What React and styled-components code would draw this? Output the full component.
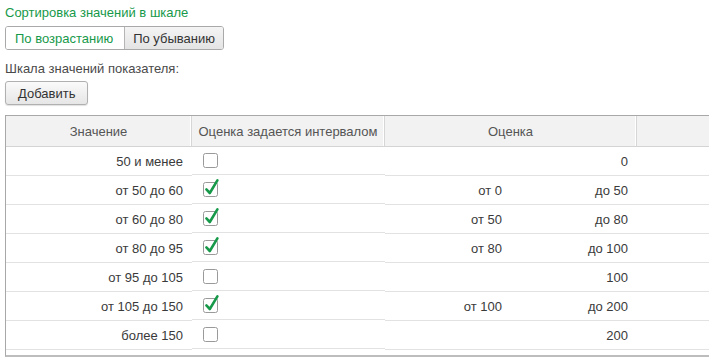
import React from "react";
import styled, { createGlobalStyle } from "styled-components";

const GREEN = "#17994a";

const rows = [
  { value: "50 и менее", interval: false, single: "0" },
  { value: "от 50 до 60", interval: true, from: "от 0", to: "до 50" },
  { value: "от 60 до 80", interval: true, from: "от 50", to: "до 80" },
  { value: "от 80 до 95", interval: true, from: "от 80", to: "до 100" },
  { value: "от 95 до 105", interval: false, single: "100" },
  { value: "от 105 до 150", interval: true, from: "от 100", to: "до 200" },
  { value: "более 150", interval: false, single: "200" },
];

const Check = ({ checked }) => (
  <svg width="18" height="20" viewBox="0 0 18 20">
    <rect x="0.5" y="4.5" width="14" height="14" rx="2" fill="#fff" stroke="#9a9a9a" />
    {checked && (
      <path
        d="M3.4 11.4 L6.8 15 L14.4 2.4"
        fill="none"
        stroke={GREEN}
        strokeWidth="2.6"
        strokeLinecap="round"
        strokeLinejoin="round"
      />
    )}
  </svg>
);

const App = () => {
  return (
    <>
      <GlobalStyle />
      <Page>
        <Title>Сортировка значений в шкале</Title>
        <Toggle>
          <ToggleButton active>По возрастанию</ToggleButton>
          <ToggleButton>По убыванию</ToggleButton>
        </Toggle>
        <Label>Шкала значений показателя:</Label>
        <Button>Добавить</Button>
        <Table>
          <Header>
            <HeadCell>Значение</HeadCell>
            <HeadCell>Оценка задается интервалом</HeadCell>
            <HeadCell span={2}>Оценка</HeadCell>
            <HeadCell last />
          </Header>
          {rows.map((r) => (
            <Row key={r.value}>
              <Cell align="right">{r.value}</Cell>
              <CheckCell>
                <Check checked={r.interval} />
              </CheckCell>
              {r.interval ? (
                <>
                  <Cell align="right">{r.from}</Cell>
                  <Cell align="right">{r.to}</Cell>
                </>
              ) : (
                <Cell align="right" span={2}>
                  {r.single}
                </Cell>
              )}
              <Cell />
            </Row>
          ))}
          <Tail />
        </Table>
      </Page>
    </>
  );
};

const GlobalStyle = createGlobalStyle`
  body {
    margin: 0;
    background: #fff;
    overflow: hidden;
    font-family: "Liberation Sans", Arial, sans-serif;
    font-size: 13px;
  }
`;

const Page = styled.div`
  padding: 4px 0 0 5px;
  display: flex;
  flex-direction: column;
  align-items: flex-start;
  width: 720px;
`;

const Title = styled.div`
  color: ${GREEN};
  line-height: 17px;
  height: 22px;
`;

const Toggle = styled.div`
  display: flex;
  height: 24px;
  border: 1px solid #a9a9a9;
  border-radius: 3px;
  overflow: hidden;
  box-sizing: border-box;
`;

const ToggleButton = styled.div`
  display: flex;
  align-items: center;
  padding: 0 ${(p) => (p.active ? "11px" : "8px")} 0 ${(p) => (p.active ? "9px" : "8px")};
  color: ${(p) => (p.active ? GREEN : "#333")};
  background: ${(p) => (p.active ? "#fff" : "linear-gradient(#f4f4f4, #e4e4e4)")};
  border-left: ${(p) => (p.active ? "none" : "1px solid #b5b5b5")};
`;

const Label = styled.div`
  color: #4a4a4a;
  margin-top: 10px;
  line-height: 17px;
`;

const Button = styled.div`
  margin-top: 4px;
  height: 24px;
  box-sizing: border-box;
  padding: 0 12px;
  display: flex;
  align-items: center;
  color: #333;
  border: 1px solid #b0b0b0;
  border-radius: 3px;
  background: linear-gradient(#fafafa, #e6e6e6);
  box-shadow: 0 1px 1px rgba(0, 0, 0, 0.12);
`;

const Table = styled.div`
  margin-top: 10px;
  width: 715px;
  border: 1px solid #a8a8a8;
  border-right: none;
  border-bottom: 2px solid #bdbdbd;
  display: grid;
  grid-template-columns: 186px 193px 126px 126px 83px;
`;

const Header = styled.div`
  display: contents;
`;

const HeadCell = styled.div`
  grid-column: span ${(p) => p.span || 1};
  height: 30px;
  background: #f2f2f2;
  border-bottom: 1px solid #d4d4d4;
  border-right: ${(p) => (p.last ? "none" : "1px solid #d6d6d6")};
  box-shadow: inset -1px 0 0 #fff;
  color: #555;
  display: flex;
  align-items: center;
  justify-content: center;
  white-space: nowrap;
`;

const Row = styled.div`
  display: contents;
`;

const Cell = styled.div`
  grid-column: span ${(p) => p.span || 1};
  height: 28px;
  border-bottom: 1px solid #e2e2e2;
  display: flex;
  align-items: center;
  justify-content: ${(p) => (p.align === "right" ? "flex-end" : "flex-start")};
  padding-right: 9px;
  color: #3a3a3a;
  white-space: nowrap;
`;

const CheckCell = styled.div`
  height: 28px;
  border-bottom: 1px solid #e2e2e2;
  display: flex;
  align-items: center;
  padding-left: 11px;
  padding-bottom: 3px;
  box-sizing: border-box;
`;

const Tail = styled.div`
  grid-column: 1 / -1;
  height: 5px;
`;

export default App;
